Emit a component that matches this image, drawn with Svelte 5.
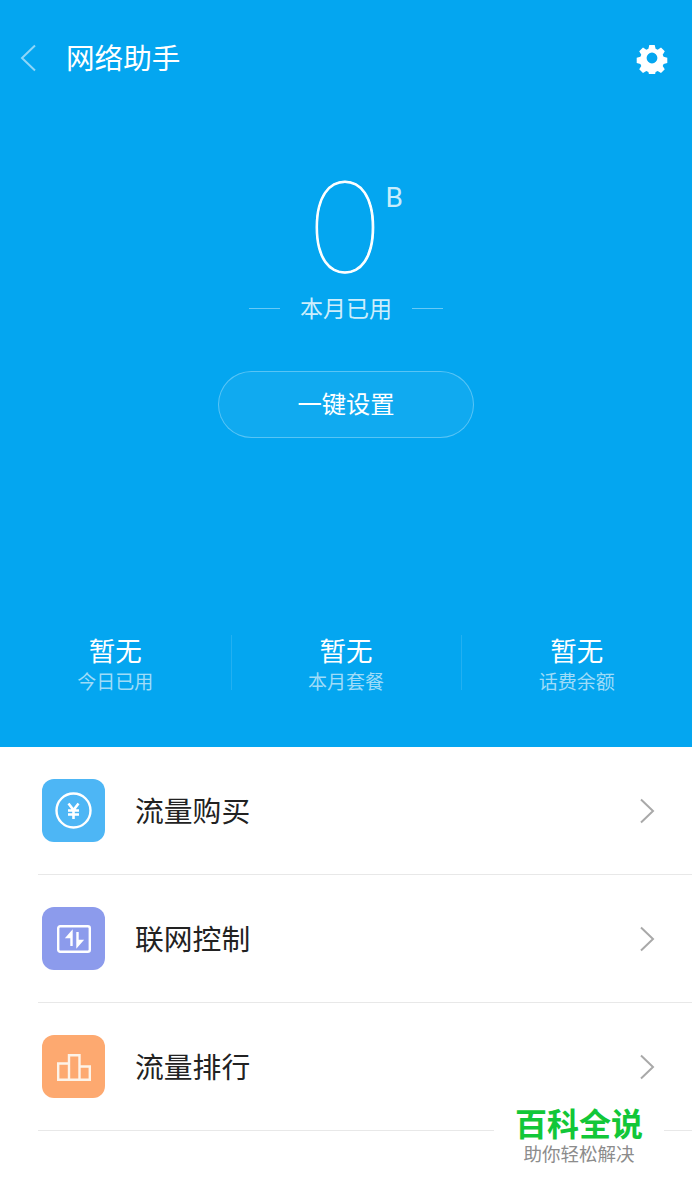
<script>
    const stats = [
        { value: "暂无", label: "今日已用" },
        { value: "暂无", label: "本月套餐" },
        { value: "暂无", label: "话费余额" },
    ];
    const rows = [
        { name: "流量购买", kind: "buy", color: "#4db6f5" },
        { name: "联网控制", kind: "net", color: "#8c9bec" },
        { name: "流量排行", kind: "rank", color: "#fda970" },
    ];
</script>

<div class="page">
    <section class="hero">
        <header class="bar">
            <svg class="back" width="17" height="28" viewBox="0 0 17 28"><path d="M15 1.500 2 14l13 12.500" fill="none" stroke="#8fd6f8" stroke-width="2" /></svg>
            <h1>网络助手</h1>
            <svg class="gear" width="32" height="32" viewBox="0 0 32 32">
                <path fill="#fff" fill-rule="evenodd" d="M13 1.500h6l1 4.200 2.300 1 3.700-2.300 4.200 4.200-2.300 3.700 1 2.300 4.100 1v6l-4.100 1-1 2.300 2.300 3.700-4.200 4.200-3.700-2.300-2.300 1-1 4.100h-6l-1-4.100-2.300-1-3.700 2.300-4.200-4.200 2.300-3.700-1-2.300-4.100-1v-6l4.100-1 1-2.300-2.300-3.700 4.200-4.200 3.700 2.300 2.300-1zM16 10a6 6 0 1 0 0 12 6 6 0 0 0 0-12z" transform="translate(1.600 1.600) scale(.9)" />
            </svg>
        </header>

        <div class="usage">
            <div class="number"><span class="digit">0</span><span class="unit">B</span></div>
            <div class="caption"><i></i><span>本月已用</span><i></i></div>
            <button>一键设置</button>
        </div>

        <div class="stats">
            {#each stats as s}
                <div class="stat">
                    <div class="value">{s.value}</div>
                    <div class="label">{s.label}</div>
                </div>
            {/each}
        </div>
    </section>

    <ul class="list">
        {#each rows as r}
            <li>
                <span class="icon" style="background: {r.color}">
                    {#if r.kind === "buy"}
                        <svg width="37" height="37" viewBox="0 0 37 37" fill="none" stroke="#fff">
                            <circle cx="18.500" cy="18.500" r="17" stroke-width="2.400" />
                            <path d="M13.500 11.500l5 6.500 5-6.500M18.500 18v9M13 18.500h11M13 22.500h11" stroke-width="2.600" />
                        </svg>
                    {:else if r.kind === "net"}
                        <svg width="34" height="28" viewBox="0 0 34 28" fill="none" stroke="#fff">
                            <rect x="1.200" y="1.200" width="31.600" height="25.600" rx="2" stroke-width="2.400" />
                            <path d="M14.500 21V8M10.500 12l4-4.500V12zM20.500 7v13M24.500 16l-4 4.500V16z" stroke-width="2.400" />
                        </svg>
                    {:else}
                        <svg class="chart" width="34" height="27" viewBox="0 0 34 27" fill="none" stroke="#fdf3e8" stroke-width="2.400">
                            <path d="M1.200 25.800V9.500H12v16.300zM12 25.800V1.200h10.500v24.600zM22.500 25.800V12.500h10.300v13.300zM1.200 25.800h31.600" />
                        </svg>
                    {/if}
                </span>
                <span class="name">{r.name}</span>
                <svg class="more" width="16" height="26" viewBox="0 0 16 26"><path d="M2 1.500 14 13 2 24.500" fill="none" stroke="#a9a9a9" stroke-width="2" /></svg>
            </li>
        {/each}
    </ul>

    <div class="mark">
        <div class="brand">百科全说</div>
        <div class="slogan">助你轻松解决</div>
    </div>
</div>

<style>
    :global(body) {
        margin: 0;
        background: #fff;
    }

    .page {
        position: relative;
        width: 692px;
        height: 1199px;
        overflow: hidden;
        font-family: "Noto Sans CJK SC", "Noto Sans", sans-serif;
    }

    .hero {
        height: 747px;
        background: #04a6f0;
        color: #fff;
        display: flex;
        flex-direction: column;
        box-sizing: border-box;
    }

    .bar {
        height: 116px;
        display: flex;
        align-items: center;
        padding: 0 24px 0 20px;
        box-sizing: border-box;
    }

    .back {
        margin-right: 29px;
    }

    h1 {
        flex: 1;
        margin: -4px 0 0;
        font-size: 28.600px;
        font-weight: 400;
    }

    .usage {
        height: 340px;
        margin-top: 64px;
        display: flex;
        flex-direction: column;
        align-items: center;
    }

    .number {
        position: relative;
        font-family: Lato, sans-serif;
        font-weight: 100;
        font-size: 129px;
        line-height: 93px;
        height: 93px;
    }

    .digit {
        display: inline-block;
        transform: translate(-1.500px, -4.500px) scaleX(0.9);
        -webkit-text-stroke: 1.200px #fff;
    }

    .unit {
        position: absolute;
        left: 100%;
        top: 4px;
        margin-left: 2px;
        font-family: Roboto, sans-serif;
        font-size: 28px;
        font-weight: 400;
        line-height: 27px;
        color: #c8edfc;
    }

    .caption {
        display: flex;
        align-items: center;
        gap: 20px;
        margin-top: 18px;
        font-size: 23px;
        line-height: 32px;
        color: #cdeefc;
    }

    .caption i {
        width: 31px;
        height: 1px;
        margin-top: 2px;
        background: rgba(255, 255, 255, 0.4);
    }

    button {
        width: 256px;
        height: 67px;
        margin-top: 48px;
        border: 1px solid rgba(255, 255, 255, 0.3);
        border-radius: 34px;
        background: rgba(255, 255, 255, 0.05);
        color: #fff;
        font: inherit;
        font-size: 24.300px;
        padding: 0 0 5px;
    }

    .stats {
        display: grid;
        grid-template-columns: repeat(3, 1fr);
        margin-top: 115px;
    }

    .stat {
        position: relative;
        height: 55px;
        display: flex;
        flex-direction: column;
        align-items: center;
    }

    .stat + .stat::before {
        content: "";
        position: absolute;
        left: 0;
        top: 0;
        bottom: 0;
        width: 1px;
        background: rgba(255, 255, 255, 0.12);
    }

    .value {
        margin-top: -1px;
        font-size: 26.500px;
        line-height: 32px;
    }

    .label {
        margin-top: 1px;
        font-size: 19px;
        line-height: 28px;
        color: #9fdcf8;
    }

    .list {
        list-style: none;
        margin: 0;
        padding: 0 0 0 38px;
    }

    li {
        height: 128px;
        box-sizing: border-box;
        border-bottom: 1px solid #e8e8e8;
        display: flex;
        align-items: center;
        padding: 0 37px 0 4px;
    }

    .icon {
        width: 63px;
        height: 63px;
        border-radius: 12px;
        display: flex;
        align-items: center;
        justify-content: center;
        margin-right: 30px;
    }

    .chart {
        margin-top: 2px;
    }

    .name {
        flex: 1;
        margin-top: -2px;
        font-size: 28.800px;
        color: #222;
    }

    .mark {
        position: absolute;
        left: 494px;
        top: 1100px;
        width: 170px;
        height: 80px;
        background: #fff;
        text-align: center;
    }

    .brand {
        margin-top: 3px;
        font-size: 32px;
        line-height: 38px;
        font-weight: 700;
        color: #12c738;
    }

    .slogan {
        font-size: 18.500px;
        line-height: 24px;
        color: #8c8c8c;
    }
</style>
